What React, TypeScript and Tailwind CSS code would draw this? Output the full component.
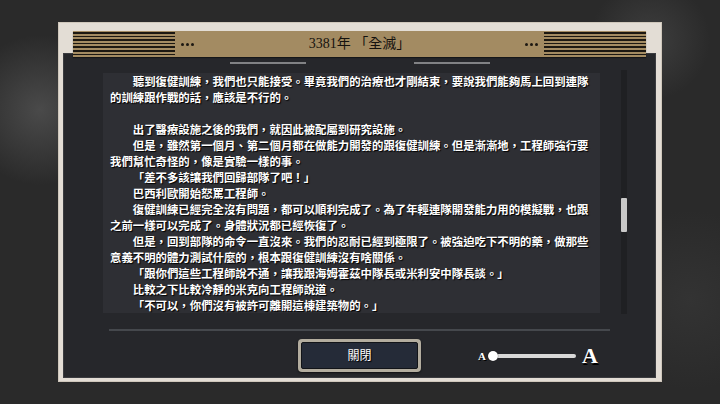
import React from "react"

const serif = { fontFamily: '"Liberation Serif", "Noto Sans CJK TC", serif' }

// [text, indented]
const lines: [string, boolean][] = [
  ["聽到復健訓練，我們也只能接受。畢竟我們的治療也才剛結束，要說我們能夠馬上回到連隊", true],
  ["的訓練跟作戰的話，應該是不行的。", false],
  ["", false],
  ["出了醫療設施之後的我們，就因此被配屬到研究設施。", true],
  ["但是，雖然第一個月、第二個月都在做能力開發的跟復健訓練。但是漸漸地，工程師強行要", true],
  ["我們幫忙奇怪的，像是實驗一樣的事。", false],
  ["「差不多該讓我們回歸部隊了吧！」", true],
  ["巴西利歐開始怒罵工程師。", true],
  ["復健訓練已經完全沒有問題，都可以順利完成了。為了年輕連隊開發能力用的模擬戰，也跟", true],
  ["之前一樣可以完成了。身體狀況都已經恢復了。", false],
  ["但是，回到部隊的命令一直沒來。我們的忍耐已經到極限了。被強迫吃下不明的藥，做那些", true],
  ["意義不明的體力測試什麼的，根本跟復健訓練沒有啥關係。", false],
  ["「跟你們這些工程師說不通，讓我跟海姆霍茲中隊長或米利安中隊長談。」", true],
  ["比較之下比較冷靜的米克向工程師說道。", true],
  ["「不可以，你們沒有被許可離開這棟建築物的。」", true],
]

function Stripes() {
  return (
    <div className="w-[102px] h-[24px] self-center bg-[repeating-linear-gradient(to_bottom,#1c1812_0px,#1c1812_1.6px,#a38b62_1.6px,#a38b62_3.6px)]" />
  )
}

function Dots() {
  return (
    <div className="flex gap-[2px] mx-[6px]">
      <span className="w-[3px] h-[3px] rounded-full bg-[#1c1812]" />
      <span className="w-[3px] h-[3px] rounded-full bg-[#1c1812]" />
      <span className="w-[3px] h-[3px] rounded-full bg-[#1c1812]" />
    </div>
  )
}

export default function App() {
  return (
    <div className="w-[720px] h-[404px] overflow-hidden bg-[#2a2a2a] bg-[radial-gradient(circle_at_40px_110px,#4a4a4a_0px,transparent_75px),radial-gradient(circle_at_650px_40px,#3e3e3e_0px,transparent_60px),radial-gradient(circle_at_690px_300px,#333_0px,transparent_90px)] pt-[22px] pl-[58px]">
      {/* cream frame */}
      <div className="w-[604px] h-[360px] bg-[#e3ddd5] border border-[#cfc7bb] pt-[8px] pl-[4px] pr-[5px] pb-[3px] flex flex-col">
        {/* header */}
        <div className="relative z-10 mx-[10px] h-[26px] -mb-[4px] bg-[#a38b62] flex items-center shadow-[0_1px_1px_rgba(0,0,0,0.4)]">
          <Stripes />
          <Dots />
          <div className="flex-1 text-center text-[14px] leading-none text-[#15120e]" style={serif}>
            3381年 「全滅」
          </div>
          <Dots />
          <Stripes />
        </div>

        {/* dark panel */}
        <div className="flex-1 bg-[#26272b] border border-[#3b3c40] flex flex-col">
          <div className="flex justify-center gap-[108px] mt-[8px]">
            <div className="w-[76px] h-[2px] bg-[#818285]" />
            <div className="w-[76px] h-[2px] bg-[#818285]" />
          </div>

          <div className="flex items-start mt-[9px] pl-[39px]">
            <div
              className="w-[497px] h-[240px] overflow-hidden bg-[#2e2f34] pl-[7px] text-[11.4px] leading-[16px] font-bold text-white [text-shadow:1px_1px_1px_#000]"
              style={{ fontFamily: '"Noto Sans CJK TC", sans-serif' }}
            >
              {lines.map(([t, indent], i) => (
                <div key={i} className={`whitespace-nowrap h-[16px] ${indent ? "pl-[2em]" : ""}`}>
                  {t}
                </div>
              ))}
            </div>
            <div className="ml-[21px] -mt-[3px] w-[6px] h-[244px] bg-[#1f2023] relative">
              <div className="absolute left-0 top-[128px] w-[6px] h-[34px] rounded-[1px] bg-[#c9c9c9]" />
            </div>
          </div>

          <div className="mt-[15px] mx-[45px] h-[2px] bg-[#45484d]" />

          <div className="grid grid-cols-[1fr_auto_1fr] items-center mt-[8px]">
            <div />
            <button className="w-[123px] h-[33px] rounded-[4px] bg-[#b3ad9f] p-[3px] shadow-[0_1px_2px_rgba(0,0,0,0.6)]">
              <div className="w-full h-full rounded-[2px] bg-[#252b38] border border-[#121418] flex items-center justify-center text-[12px] text-white [text-shadow:1px_1px_1px_#000]" style={serif}>
                關閉
              </div>
            </button>
            <div className="flex items-center pl-[57px]">
              <span className="text-[11px] font-bold text-white [text-shadow:1px_1px_0_#000] leading-none mt-[2px]" style={serif}>
                A
              </span>
              <div className="relative ml-[2px] w-[88px] h-[10px] flex items-center">
                <div className="w-full h-[4px] rounded-full bg-[#d8d8d8] ml-[4px]" />
                <div className="absolute left-0 top-0 w-[10px] h-[10px] rounded-full bg-white shadow-[0_0_1px_#000]" />
              </div>
              <span className="ml-[6px] text-[22px] font-bold text-white [text-shadow:1px_2px_0_#000] leading-none" style={serif}>
                A
              </span>
            </div>
          </div>
        </div>
      </div>
    </div>
  )
}
